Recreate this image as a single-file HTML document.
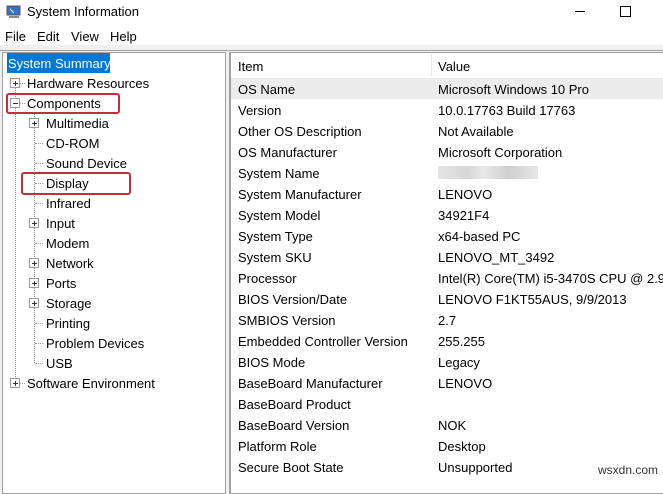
<!DOCTYPE html><html><head><style>
body{margin:0;width:663px;height:481px;overflow:hidden;background:#f0f0f0;font-family:"Liberation Sans",sans-serif;font-size:13px;color:#000;position:relative}
div{white-space:nowrap}
.a{position:absolute}
.t{line-height:20px}
.box{position:absolute;width:8px;height:8px;border:1px solid #999;background:#fff;font-size:0}
.box:before{content:"";position:absolute;left:2px;top:4px;width:5px;height:1px;background:#333}
.box.p:after{content:"";position:absolute;left:4px;top:2px;width:1px;height:5px;background:#333}
.dh{position:absolute;height:0;border-top:1px dotted #999;width:8px}
.dv{position:absolute;width:0;border-left:1px dotted #999}
.r{position:absolute;left:238px;line-height:21px}
.v{position:absolute;left:438px;line-height:21px}
</style></head><body>
<div class="a" style="left:0;top:0;width:663px;height:45px;background:#fff"></div>
<svg class="a" style="left:6px;top:4px" width="16" height="16"><rect x="1" y="2" width="13" height="9" fill="#3a6fc4" stroke="#555"/><rect x="3" y="12" width="10" height="2" fill="#888"/><path d="M4 5l4 4" stroke="#fff"/></svg>
<div class="a" style="left:27px;top:4px;font-size:13px">System Information</div>
<div class="a" style="left:575px;top:11px;width:10px;height:1px;background:#000"></div>
<div class="a" style="left:620px;top:6px;width:9px;height:9px;border:1px solid #000"></div>
<div class="a" style="left:5px;top:29px">File</div>
<div class="a" style="left:37px;top:29px">Edit</div>
<div class="a" style="left:71px;top:29px">View</div>
<div class="a" style="left:110px;top:29px">Help</div>
<div class="a" style="left:0;top:50px;width:663px;height:1px;background:#a0a0a0"></div>
<div class="a" style="left:2px;top:52px;width:222px;height:440px;background:#fff;border:1px solid #a0a0a0"></div>
<div class="a" style="left:229px;top:52px;width:440px;height:440px;background:#fff;border:1px solid #a0a0a0;border-left:2px solid #a0a0a0"></div>
<div class="a" style="left:7px;top:53px;width:103px;height:20px;background:#0078d7"></div>
<div class="a t" style="left:8px;top:54px;color:#fff">System Summary</div>
<div class="dv" style="left:15px;top:83px;height:300px"></div>
<div class="dv" style="left:34px;top:113px;height:250px"></div>
<div class="box p" style="left:10px;top:78px"></div><div class="dh" style="left:20px;top:83px;width:5px"></div><div class="a t" style="left:27px;top:74px">Hardware Resources</div>
<div class="box" style="left:10px;top:98px"></div><div class="dh" style="left:20px;top:103px;width:5px"></div><div class="a t" style="left:27px;top:94px">Components</div>
<div class="a" style="left:6px;top:93px;width:110px;height:17px;border:2px solid #c0303a;border-radius:3px"></div>
<div class="box p" style="left:29px;top:118px"></div><div class="a t" style="left:46px;top:114px">Multimedia</div>
<div class="dh" style="left:35px;top:143px"></div><div class="a t" style="left:46px;top:134px">CD-ROM</div>
<div class="dh" style="left:35px;top:163px"></div><div class="a t" style="left:46px;top:154px">Sound Device</div>
<div class="dh" style="left:35px;top:183px"></div><div class="a t" style="left:46px;top:174px">Display</div>
<div class="a" style="left:21px;top:172px;width:106px;height:19px;border:2px solid #c0303a;border-radius:3px"></div>
<div class="dh" style="left:35px;top:203px"></div><div class="a t" style="left:46px;top:194px">Infrared</div>
<div class="box p" style="left:29px;top:218px"></div><div class="a t" style="left:46px;top:214px">Input</div>
<div class="dh" style="left:35px;top:243px"></div><div class="a t" style="left:46px;top:234px">Modem</div>
<div class="box p" style="left:29px;top:258px"></div><div class="a t" style="left:46px;top:254px">Network</div>
<div class="box p" style="left:29px;top:278px"></div><div class="a t" style="left:46px;top:274px">Ports</div>
<div class="box p" style="left:29px;top:298px"></div><div class="a t" style="left:46px;top:294px">Storage</div>
<div class="dh" style="left:35px;top:323px"></div><div class="a t" style="left:46px;top:314px">Printing</div>
<div class="dh" style="left:35px;top:343px"></div><div class="a t" style="left:46px;top:334px">Problem Devices</div>
<div class="dh" style="left:35px;top:363px"></div><div class="a t" style="left:46px;top:354px">USB</div>
<div class="box p" style="left:10px;top:378px"></div><div class="dh" style="left:20px;top:383px;width:5px"></div><div class="a t" style="left:27px;top:374px">Software Environment</div>

<div class="a" style="left:431px;top:54px;width:1px;height:22px;background:#e5e5e5"></div>
<div class="r" style="top:56px">Item</div><div class="v" style="top:56px">Value</div>
<div class="a" style="left:231px;top:78px;width:432px;height:21px;background:#ececec"></div>
<div class="r" style="top:79px">OS Name</div><div class="v" style="top:79px">Microsoft Windows 10 Pro</div>
<div class="r" style="top:100px">Version</div><div class="v" style="top:100px">10.0.17763 Build 17763</div>
<div class="r" style="top:121px">Other OS Description</div><div class="v" style="top:121px">Not Available</div>
<div class="r" style="top:142px">OS Manufacturer</div><div class="v" style="top:142px">Microsoft Corporation</div>
<div class="r" style="top:163px">System Name</div><div class="a" style="left:438px;top:166px;width:100px;height:13px;background:linear-gradient(90deg,#e4e4e4,#d6d6d6 30%,#e8e8e8 45%,#cfcfcf 70%,#e6e6e6)"></div>
<div class="r" style="top:184px">System Manufacturer</div><div class="v" style="top:184px">LENOVO</div>
<div class="r" style="top:205px">System Model</div><div class="v" style="top:205px">34921F4</div>
<div class="r" style="top:226px">System Type</div><div class="v" style="top:226px">x64-based PC</div>
<div class="r" style="top:247px">System SKU</div><div class="v" style="top:247px">LENOVO_MT_3492</div>
<div class="r" style="top:268px">Processor</div><div class="v" style="top:268px">Intel(R) Core(TM) i5-3470S CPU @ 2.90</div>
<div class="r" style="top:289px">BIOS Version/Date</div><div class="v" style="top:289px">LENOVO F1KT55AUS, 9/9/2013</div>
<div class="r" style="top:310px">SMBIOS Version</div><div class="v" style="top:310px">2.7</div>
<div class="r" style="top:331px">Embedded Controller Version</div><div class="v" style="top:331px">255.255</div>
<div class="r" style="top:352px">BIOS Mode</div><div class="v" style="top:352px">Legacy</div>
<div class="r" style="top:373px">BaseBoard Manufacturer</div><div class="v" style="top:373px">LENOVO</div>
<div class="r" style="top:394px">BaseBoard Product</div>
<div class="r" style="top:415px">BaseBoard Version</div><div class="v" style="top:415px">NOK</div>
<div class="r" style="top:436px">Platform Role</div><div class="v" style="top:436px">Desktop</div>
<div class="r" style="top:457px">Secure Boot State</div><div class="v" style="top:457px">Unsupported</div>
<div class="a" style="left:598px;top:463px;font-size:12px;color:#333">wsxdn.com</div>
</body></html>
